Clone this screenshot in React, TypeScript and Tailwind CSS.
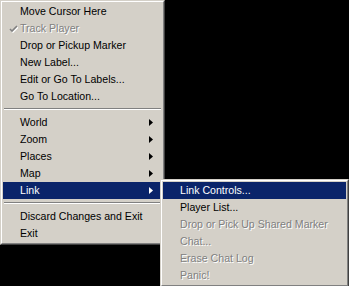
import React from "react";

type Item =
  | { kind: "sep" }
  | { kind: "item"; label: string; disabled?: boolean; checked?: boolean; sub?: boolean; active?: boolean };

const mainItems: Item[] = [
  { kind: "item", label: "Move Cursor Here" },
  { kind: "item", label: "Track Player", disabled: true, checked: true },
  { kind: "item", label: "Drop or Pickup Marker" },
  { kind: "item", label: "New Label..." },
  { kind: "item", label: "Edit or Go To Labels..." },
  { kind: "item", label: "Go To Location..." },
  { kind: "sep" },
  { kind: "item", label: "World", sub: true },
  { kind: "item", label: "Zoom", sub: true },
  { kind: "item", label: "Places", sub: true },
  { kind: "item", label: "Map", sub: true },
  { kind: "item", label: "Link", sub: true, active: true },
  { kind: "sep" },
  { kind: "item", label: "Discard Changes and Exit" },
  { kind: "item", label: "Exit" },
];

const subItems: Item[] = [
  { kind: "item", label: "Link Controls...", active: true },
  { kind: "item", label: "Player List..." },
  { kind: "item", label: "Drop or Pick Up Shared Marker", disabled: true },
  { kind: "item", label: "Chat...", disabled: true },
  { kind: "item", label: "Erase Chat Log", disabled: true },
  { kind: "item", label: "Panic!", disabled: true },
];

function Arrow({ white }: { white?: boolean }) {
  return (
    <svg width="4" height="7" viewBox="0 0 4 7" className="block">
      <polygon points="0,0 4,3.5 0,7" fill={white ? "#ffffff" : "#000000"} />
    </svg>
  );
}

function Check() {
  return (
    <svg width="9" height="8" viewBox="0 0 9 8" className="block">
      <path d="M1 4 L3 6 L8 1" stroke="#ffffff" strokeWidth="1.6" fill="none" transform="translate(1,1)" />
      <path d="M1 4 L3 6 L8 1" stroke="#808080" strokeWidth="1.6" fill="none" />
    </svg>
  );
}

function Row({ item }: { item: Item }) {
  if (item.kind === "sep") {
    return (
      <div className="h-[9px] pt-[3px] px-[1px]">
        <div className="h-px bg-[#808080]" />
        <div className="h-px bg-white" />
      </div>
    );
  }
  const bg = item.active ? "bg-[#0a246a] text-white" : "text-black";
  return (
    <div className={`h-[17px] flex items-center relative ${bg}`}>
      <div className="w-[17px] flex justify-center items-center pl-[4px]">
        {item.checked ? <Check /> : null}
      </div>
      <div
        className={`flex-1 whitespace-nowrap leading-[17px] ${
          item.disabled ? "text-[#808080] [text-shadow:1px_1px_0_#ffffff]" : ""
        }`}
      >
        {item.label}
      </div>
      {item.sub ? (
        <div className="w-[13px] flex items-center">
          <Arrow white={item.active} />
        </div>
      ) : null}
    </div>
  );
}

function Menu({ items, width }: { items: Item[]; width: string }) {
  return (
    <div
      className={`${width} bg-[#d4d0c8] border-t border-l border-t-[#d4d0c8] border-l-[#d4d0c8] border-r border-b border-r-[#404040] border-b-[#404040]`}
    >
      <div className="border-t border-l border-t-white border-l-white border-r border-b border-r-[#808080] border-b-[#808080] p-px">
        {items.map((it, i) => (
          <Row key={i} item={it} />
        ))}
      </div>
    </div>
  );
}

export default function App() {
  return (
    <div
      className="w-[349px] h-[286px] bg-black relative overflow-hidden text-[10.6px]"
      style={{ fontFamily: '"Liberation Sans", Arial, sans-serif' }}
    >
      <Menu items={mainItems} width="w-[165px]" />
      <div className="absolute left-[160px] top-[179px]">
        <Menu items={subItems} width="w-[189px]" />
      </div>
    </div>
  );
}
